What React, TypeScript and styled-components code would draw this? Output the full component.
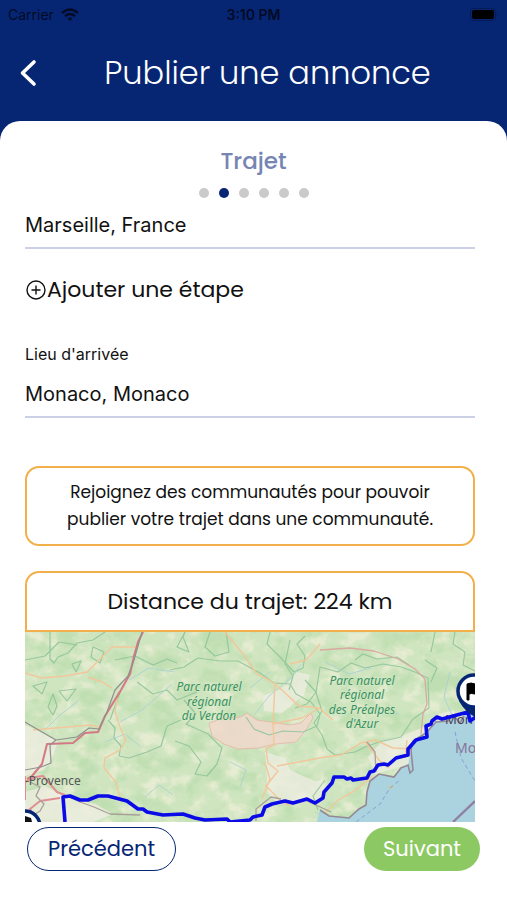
import React from "react";
import styled, { createGlobalStyle } from "styled-components";

const navy = "#062674";
const amber = "#f2b04a";
const display = '"Poppins", "Inter", sans-serif';
const system = '"Inter", "Roboto", sans-serif';

const GlobalStyle = createGlobalStyle`
  * { box-sizing: border-box; }
  body { margin: 0; background: #fff; color: #111; font-family: ${system}; }
  button, input { font: inherit; color: inherit; }
`;

const Page = styled.div`
  min-height: 100vh;
  display: flex;
  flex-direction: column;
  background: ${navy};
`;

const StatusBar = styled.div`
  display: grid;
  grid-template-columns: 1fr auto 1fr;
  align-items: center;
  height: 28px;
  padding: 0 8px;
  color: #020b26;
  font-size: 14px;
`;

const Carrier = styled.span`
  display: flex;
  align-items: center;
  gap: 7px;
`;

const Clock = styled.span`
  font-weight: 600;
`;

const Battery = styled.svg`
  justify-self: end;
`;

const Header = styled.header`
  display: grid;
  grid-template-columns: 56px 1fr 28px;
  align-items: center;
  height: 93px;
  padding-bottom: 4px;
`;

const BackButton = styled.button`
  display: flex;
  align-items: center;
  justify-content: center;
  height: 44px;
  padding: 0;
  border: 0;
  background: none;
  color: #fff;
`;

const Title = styled.h1`
  margin: 0;
  color: #fff;
  font: 300 32px/44px ${display};
  text-align: center;
  white-space: nowrap;
`;

const Sheet = styled.main`
  flex: 1;
  padding: 24px 0 0;
  border-radius: 20px 20px 0 0;
  background: #fff;
`;

const StepTitle = styled.h2`
  margin: 0;
  color: #7585b4;
  font: 500 23px/32px ${display};
  text-align: center;
`;

const Steps = styled.ol`
  display: flex;
  justify-content: center;
  gap: 10px;
  margin: 11px 0 0;
  padding: 0;
  list-style: none;
`;

const Step = styled.li<{ $current: boolean }>`
  width: 10px;
  height: 10px;
  border-radius: 50%;
  background: ${(p) => (p.$current ? navy : "#cacaca")};
`;

const Form = styled.form`
  display: flex;
  flex-direction: column;
  padding: 0 32px 0 25px;
`;

const FieldLabel = styled.label`
  padding-bottom: 3px;
  font-size: 16px;
  line-height: 20px;
`;

const TextInput = styled.input`
  width: 100%;
  height: 51px;
  padding: 4px 0 0;
  border: 0;
  border-bottom: 2px solid #ccd1e5;
  outline: 0;
  background: none;
  font-size: 20px;
`;

const AddStop = styled.button`
  display: flex;
  align-items: center;
  align-self: flex-start;
  gap: 1px;
  margin: 24px 0 37px;
  padding: 0 1px;
  border: 0;
  background: none;
  font: 400 22px/34px ${display};
`;

const Notice = styled.p`
  margin: 48px 0 0;
  padding: 11px 32px;
  border: 2px solid ${amber};
  border-radius: 14px;
  font: 400 17px/27px ${display};
  text-align: center;
`;

const RouteCard = styled.section`
  margin-top: 25px;
`;

const Distance = styled.h3`
  margin: 0;
  padding: 12px;
  border: 2px solid ${amber};
  border-radius: 14px 14px 0 0;
  font: 400 22px/33px ${display};
  text-align: center;
`;

const MapView = styled.svg`
  display: block;
  width: 100%;
  height: auto;
`;

const Actions = styled.footer`
  display: flex;
  justify-content: space-between;
  padding: 5px 27px 29px;
  background: #fff;
`;

const PillButton = styled.button<{ $primary?: boolean }>`
  height: 44px;
  padding: 0 ${(p) => (p.$primary ? 19 : 20)}px;
  border: ${(p) => (p.$primary ? "0" : "1px solid " + navy)};
  border-radius: 22px;
  background: ${(p) => (p.$primary ? "#8dc963" : "#fff")};
  color: ${(p) => (p.$primary ? "#fff" : navy)};
  font: 400 21px/30px ${display};
`;

function RouteMap() {
  return (
    <MapView viewBox="0 0 450 190" role="img" aria-label="Carte du trajet de Marseille à Monaco">
      <defs>
        <filter id="fields" x="0" y="0" width="100%" height="100%" colorInterpolationFilters="sRGB">
          <feTurbulence type="fractalNoise" baseFrequency="0.06 0.07" numOctaves="4" seed="8" />
          <feColorMatrix values="0 0 0 0 0.94  0 0 0 0 0.94  0 0 0 0 0.85  4 0 0 0 -1.9" />
        </filter>
        <filter id="woods" x="0" y="0" width="100%" height="100%" colorInterpolationFilters="sRGB">
          <feTurbulence type="fractalNoise" baseFrequency="0.04 0.05" numOctaves="4" seed="23" />
          <feColorMatrix values="0 0 0 0 0.69  0 0 0 0 0.85  0 0 0 0 0.64  0 4 0 0 -1.8" />
        </filter>
      </defs>
      <rect width="450" height="190" fill="#cfe5c0" />
      <rect width="450" height="190" filter="url(#fields)" opacity=".7" />
      <rect width="450" height="190" filter="url(#woods)" opacity=".5" />

      <g fill="#f0eee3" opacity=".75">
        <path d="M0 93l18 8 15 9-6 16-8 12-19 6zM0 160l20-6 20 11 30 7 18 10-20 8H0z" />
        <path d="M238 64l20-8 14-16 13 3-6 20-22 18-18-2zM240 120l20 6 5 12 22 10 14 4-18 16-30 5-10-12zM272 154l25-6 6 10-12 12-20-5z" />
        <path d="M343 125l14-16 20-5 24-10 12-12 16-4 4 14-30 16-17 24-36 10z" />
      </g>
      <path d="M184 91l12-4 20-2 6-4 10 7 14 2 18 3 12-2 10-10 2 5-7 12-10 12-20 2-18 4-20 1-14-5-12-8z" fill="#f1d9cc" stroke="#e8b7aa" opacity=".85" />

      <g fill="none" stroke="#91c59a" strokeWidth="1.2" strokeLinejoin="round" opacity=".9">
        <path d="M25 0v27l4 4 4-6 10-4 9-10 16-3 12-8M68 15l11 5-4 11-9-6zM8 54l14-4-5 12zM28 62l4 12-4 9-5-8zM34 59l17-2-9 12zM47 32l9-3-5 11z" />
        <path d="M83 88l7 8-1 10 7 8-2 10 10 2 18-6 14-6 6-20 14-6M150 109l14 5 12 16-6 12 12 2 10-12 5-16-14-14-22-10 10-10-12-14" />
        <path d="M145 38l14-3 14-9 22 3 18 0 22 12 14 10 16 1 6 10 15 8 9 12-3 12-14 6-20-1-14 4-15-6-8-12M245 0l-3 12 14 14 13 14 9-4 2-12-8-12 8-8M160 0l-8 15 12 5-6-15zM280 48l11 12-9 12-12 4" />
        <path d="M295 35l18 5 13-9 14 5 18-4 18 3 14 5 13 6 1 30-16 11-12 18-22 5-14 5-10 5-20 3-8-6-5-14-8-12 8-12-6-18zM430 0l-2 12 12 8-2 13 12 6M410 0l-4 20" />
        <path d="M0 28l20-4 14-14 18 3M90 28l20-4 18 9 14-6 10 4M300 148l-12 16 5 14M112 50l16 12 14-4 10 10 20-8" />
        <path d="M185 0l-5 15 10 9 14-4-3-20M265 8l-5 24 8 12-4 14M400 28l12 8-6 14M96 58l-6 16-5 14M330 28l8-6 14 5 20-2 12 8" />
      </g>
      <g fill="none" stroke="#a6cfd4" strokeWidth="1" opacity=".8">
        <path d="M20 98l14-14 20-16M95 90l22-12 30-26M104 48l20-12 26 4M230 82l14-18 22-18 10-14M225 56l20-16M80 110l20-8 15 12M120 165l14-12 14 10M205 130l16 8-6 18M300 30l24 12 22-6M350 80l24 2M425 40l-6 25 8 18M310 190l-20-10" />
      </g>
      <g fill="none" stroke="#f2c79b" strokeWidth="1.4">
        <path d="M0 41l16 5 24-2 22-4 18-18 7-7 24 0M63 45l14 5 10 6M8 98l34-3 24-2 10 3M93 60l-3 20 6 18 5 10-6 10-15 8-1 10 12 14 5 20" />
        <path d="M200 0l18 22 14 20 14 7 12 10 16 15 20 2 14 12M250 51l-2 40 1 22-8 4 2 14 10 8-12 15 16 16 8 4M295 12l-14 16-16 4M247 92l30-6 18-10M252 134l48-9 16-2 20-12 14-3 18 8 20 1 8-2M295 186l18-18 18-10 16-14M240 131l5 16-8 20M382 108l-2 18M340 110l14 18 10 8" />
      </g>
      <g fill="none" strokeLinejoin="round">
        <path d="M118 0l-5 10-4 14-4 18-9 16-16 26-7 16-13 1-12 10-26 1-5 20-10 12-5 3" stroke="#d47983" strokeWidth="2" />
        <path d="M117 0l-8 28-6 16-13 14-8 22-8 17-10-1-12 9-21 3-14-8L0 90M31 108l-6 5 1 18-10 4-16 3" stroke="#8f9190" strokeWidth="1.2" />
        <path d="M0 150l10-5 8-1 14 16 8 3M0 168v-24M12 190l-7-13 10-8 20-3" stroke="#df8e92" strokeWidth="2" />
        <path d="M5 150l10 5-4 9 8 8-4 7-8 5M40 163l15 7 14 5 16 7 30 1M231 189v-12l15-12 10 2M280 168l26 12M342 110l8 10 1 20" stroke="#a99f9b" strokeWidth="1.3" />
        <path d="M295 18l30-2 24 3 24 8 17 10 10 10 2 25-4 10-2 20" stroke="#d9a9a2" strokeWidth="1.3" />
      </g>

      <path d="M295 178l9 6 20 2 10-9 7-4 1-13 3-11 9-7 15 3 7-9 7-3 3-16 2-9 13-8 10-11 12-1 5-6 7 6 4-7 16-2v111H292z" fill="#aad3df" />
      <path d="M295 178l9 6 20 2 10-9 7-4 1-13 3-11 9-7 15 3 7-9 7-3 2 8 3-3-2-20 2-9 13-8 10-11 12-1 5-6 7 8 4-7" fill="none" stroke="#948896" strokeWidth="1.6" />
      <path d="M362 153l8 1-5 4z" fill="#c2ceb4" />
      <path d="M331 190l24-18 10-16 10-8M430 100l6 26 14 23" fill="none" stroke="#849fd2" strokeDasharray="4 3" />
      <path d="M428 190l22-21" stroke="#8e81a3" strokeWidth="2.4" />

      <g fontFamily="Noto Sans, sans-serif">
        <g fill="#36925a" fontSize="12" fontStyle="italic" textAnchor="middle" stroke="#d9e9cf" strokeWidth="1" paintOrder="stroke">
          <text x="184" y="59">Parc naturel</text>
          <text x="184" y="74">régional</text>
          <text x="184" y="88">du Verdon</text>
          <text x="337" y="53">Parc naturel</text>
          <text x="337" y="67">régional</text>
          <text x="337" y="82">des Préalpes</text>
          <text x="337" y="96">d'Azur</text>
        </g>
        <text x="0" y="153" fill="#555" fontSize="12">-Provence</text>
        <text x="420" y="92" fill="#4b4058" fontSize="13">Mon</text>
        <text x="430" y="121" fill="#86749b" fontSize="14">Mo</text>
      </g>

      <path
        d="M40 190l-2-25 7-1 10 4h8l10-4h10l19 5 11 8h5l4 3 16 3 20-1 12 4 10 2 22-1 3 3 20-2 3-3 9-2 3-8 7-3 13-3 8 2 14-4 8 4 8-5 1-6 8-9 2-6h10l3 2 4-1 2 2 14-2 3-6 4-1 4-6 6-1 4 1 8-7 12-3v-6l8-9 11-3-1-11 5-2 1-3 5-4 5 2 26-7 2 9 6-4"
        fill="none" stroke="#0b0be8" strokeWidth="3.6" strokeLinejoin="round"
      />
      <path d="M434 69q6 11 16 16V42" fill={navy} />
      <circle cx="449" cy="59" r="16" fill="#fff" stroke={navy} strokeWidth="3.5" />
      <path d="M442 68V52q4-2 8 0v10q-4-1-6 0v6z" fill="#000" stroke="#000" />
      <circle cx="0" cy="194" r="15" fill="#fff" stroke={navy} strokeWidth="3.5" />
      <path d="M0 184l6 2 1 4H0z" fill="#111" />
    </MapView>
  );
}

export default function App() {
  return (
    <>
      <GlobalStyle />
      <Page>
        <StatusBar>
          <Carrier>
            Carrier
            <svg width="18" height="13" viewBox="0 0 18 13" fill="none" stroke="currentColor" strokeWidth="2.4" aria-hidden="true">
              <path d="M1 5q8-7 16 0M4 8q5-4 10 0" />
              <path d="M6.5 10.5q2.5-2 5 0L9 13z" fill="currentColor" stroke="none" />
            </svg>
          </Carrier>
          <Clock>3:10 PM</Clock>
          <Battery width="29" height="13" viewBox="0 0 29 13" aria-hidden="true">
            <rect x=".5" y=".5" width="25" height="12" rx="3" fill="none" stroke="#041b55" />
            <rect x="2" y="2" width="22" height="9" rx="2" fill="#000" />
            <path d="M27 4v5q2-2.500 0-5" fill="#041b55" />
          </Battery>
        </StatusBar>
        <Header>
          <BackButton type="button" aria-label="Retour">
            <svg width="18" height="28" viewBox="0 0 18 28" fill="none" stroke="currentColor" strokeWidth="3.6" strokeLinecap="round" strokeLinejoin="round" aria-hidden="true">
              <path d="M15 3L3.500 14 15 25" />
            </svg>
          </BackButton>
          <Title>Publier une annonce</Title>
        </Header>
        <Sheet>
          <StepTitle>Trajet</StepTitle>
          <Steps aria-label="Étapes">
            {[0, 1, 2, 3, 4, 5].map((n) => (
              <Step key={n} $current={n === 1} />
            ))}
          </Steps>
          <Form>
            <TextInput aria-label="Lieu de départ" defaultValue="Marseille, France" />
            <AddStop type="button">
              <svg width="20" height="20" viewBox="0 0 20 20" fill="none" stroke="currentColor" strokeWidth="1.4" aria-hidden="true">
                <circle cx="10" cy="10" r="9" />
                <path d="M10 5.500v9M5.500 10h9" />
              </svg>
              Ajouter une étape
            </AddStop>
            <FieldLabel htmlFor="arrival">Lieu d'arrivée</FieldLabel>
            <TextInput id="arrival" defaultValue="Monaco, Monaco" />
            <Notice>Rejoignez des communautés pour pouvoir publier votre trajet dans une communauté.</Notice>
            <RouteCard>
              <Distance>Distance du trajet: 224 km</Distance>
              <RouteMap />
            </RouteCard>
          </Form>
        </Sheet>
        <Actions>
          <PillButton type="button">Précédent</PillButton>
          <PillButton type="button" $primary>Suivant</PillButton>
        </Actions>
      </Page>
    </>
  );
}
